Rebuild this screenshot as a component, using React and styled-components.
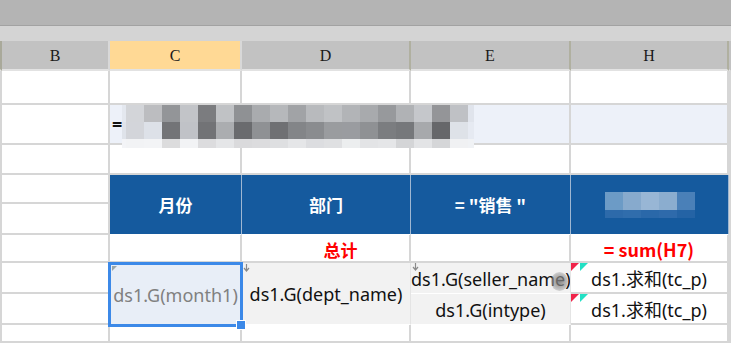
import React from 'react';
import styled, { createGlobalStyle, css } from 'styled-components';

const GlobalStyle = createGlobalStyle`
  html, body {
    margin: 0;
    padding: 0;
    background: #ffffff;
    overflow: hidden;
  }
  body {
    font-family: 'Noto Sans', 'Noto Sans CJK SC', sans-serif;
  }
`

const Page = styled.div`
  width: 731px;
  height: 343px;
  display: flex;
  flex-direction: column;
`

const TopBar = styled.div`
  height: 25px;
  background: #b4b4b4;
  border-bottom: 1px solid #a2a2a2;
`

const FormulaStrip = styled.div`
  height: 15px;
  background: #d4d4d4;
`

const Sheet = styled.div`
  flex: 1;
  display: grid;
  grid-template-columns: 2px 108px 132px 169px 160px 158px 2px;
  grid-template-rows: 30px 34px 40px 30px 29px 31px 28px 31px 31px 1fr;
`

const at = (p) => css`
  grid-column: ${p.$col} / span ${p.$cs || 1};
  grid-row: ${p.$row} / span ${p.$rs || 1};
`

const ColHeader = styled.div`
  ${at}
  box-sizing: border-box;
  display: flex;
  align-items: center;
  justify-content: center;
  background: ${(p) => (p.$active ? '#ffd995' : '#c2c2c2')};
  border-right: 2px solid ${(p) => p.$line || '#d6d6d6'};
  border-bottom: 2px solid #e2e2e2;
  font-family: 'Liberation Serif', serif;
  font-size: 16px;
  color: #1a1a1a;
  padding-top: 2px;
`

const Cell = styled.div`
  ${at}
  box-sizing: border-box;
  position: relative;
  display: flex;
  align-items: center;
  justify-content: center;
  min-width: 0;
  background: ${(p) => p.$bg || '#ffffff'};
  border-right: 2px solid ${(p) => p.$line || '#d6d6d6'};
  border-bottom: 2px solid ${(p) => p.$line || '#d6d6d6'};
  font-size: 18px;
  color: #111111;
  white-space: nowrap;
`

const TitleCell = styled(Cell)`
  justify-content: flex-start;
  align-items: flex-start;
  padding-left: 2px;
  overflow: visible;
  z-index: 1;
`

const Equals = styled.span`
  font-weight: 700;
  font-size: 18px;
  line-height: 38px;
  margin-right: 0;
`

const HeadCell = styled(Cell)`
  background: #155a9e;
  border-right: 1px solid #9fb7d2;
  border-bottom: 1px solid #ffffff;
  color: #ffffff;
  font-family: 'Noto Sans CJK SC', sans-serif;
  font-weight: 700;
  font-size: 17px;
`

const TotalCell = styled(Cell)`
  color: #ff0000;
  font-family: 'Noto Sans CJK SC', sans-serif;
  font-weight: 700;
  font-size: ${(p) => p.$size || 17}px;
  padding-left: ${(p) => p.$shift || 0}px;
  padding-top: 2px;
`

const DataCell = styled(Cell)`
  background: #f2f2f2;
  border-right: 1px solid #e4e4e4;
  border-bottom: 1px solid #ffffff;
  justify-content: ${(p) => (p.$left ? 'flex-start' : 'center')};
  overflow: hidden;
  padding-top: 1px;
`

const SelectedCell = styled(Cell)`
  background: #e8eef7;
  border: 3px solid #3c89e8;
  margin: -1px -1px -2px -2px;
  color: #808080;
  z-index: 2;
  overflow: visible;
  &::after {
    content: '';
    position: absolute;
    right: -6px;
    bottom: -6px;
    width: 8px;
    height: 8px;
    background: #3c89e8;
    border: 1px solid #ffffff;
  }
`

const SumCell = styled(Cell)`
  padding-top: 1px;
`

const Mark = styled.svg`
  position: absolute;
  left: ${(p) => p.$x || 0}px;
  top: ${(p) => p.$y || 0}px;
`

const Smudge = styled.div`
  position: absolute;
  right: 2px;
  top: 9px;
  width: 17px;
  height: 19px;
  border-radius: 50%;
  background: radial-gradient(circle, rgba(120,120,120,0.85) 0%, rgba(150,150,150,0.6) 55%, rgba(200,200,200,0) 100%);
`

const titleTop = ['#d3d5d9','#bcbdc0','#939598','#c2c4c8','#7b7c7f','#c0c2c5','#8f9194','#a9abae','#b6b8bb','#a1a3a6','#b8babd','#c0c2c5','#b2b4b7','#a8aaad','#97999c','#b0b2b5','#c5c7cb','#949598','#bfc1c5'];
const titleMid = ['#d3d5da','#dde1e8','#737477','#c0c2c7','#727376','#abadb0','#6a6b6e','#8f9194','#6f7073','#838588','#8a8c8f','#9a9c9f','#9a9ca0','#8f9194','#7b7d80','#76787b','#a7a9ac','#66676a','#dee2e8'];
const titleLow = ['#f2f3f5','#f3f4f6','#dcdcdd','#f2f3f5','#dcdcde','#e5e6e8','#dadadc','#dcdcde','#dedfe1','#e5e6e8','#dcdde0','#dfe0e2','#eceeef','#e3e4e6','#e5e6e8','#d4d5d7','#e3e4e6','#d5d6d8','#f0f1f3'];

const TitleMosaic = () => (
  <svg width="352" height="43" style={{ display: 'block' }}>
    <rect x="0" y="0" width="4" height="17" fill="#e4e8ef" />
    <rect x="0" y="17" width="4" height="17" fill="#dfe3ea" />
    <rect x="0" y="34" width="4" height="9" fill="#f3f4f7" />
    {titleTop.map((c, i) => (
      <React.Fragment key={i}>
        <rect x={4 + i * 18} y="0" width="18" height="17" fill={c} />
        <rect x={4 + i * 18} y="17" width="18" height="17" fill={titleMid[i]} />
        <rect x={4 + i * 18} y="34" width="18" height="9" fill={titleLow[i]} />
      </React.Fragment>
    ))}
    <rect x="346" y="0" width="6" height="17" fill="#e0e4ec" />
    <rect x="346" y="17" width="6" height="17" fill="#e6eaf2" />
    <rect x="346" y="34" width="6" height="9" fill="#f0f2f5" />
  </svg>
);

const headTop = ['#6c9bc6', '#87aacd', '#98b6d5', '#8badcf', '#4a80b8'];
const headLow = ['#2d6aaa', '#306dac', '#2a68a9', '#2e6aab', '#2463a5'];

const HeadMosaic = () => (
  <svg width="90" height="26">
    {headTop.map((c, i) => (
      <React.Fragment key={i}>
        <rect x={i * 18} y="0" width="18" height="18" fill={c} />
        <rect x={i * 18} y="18" width="18" height="8" fill={headLow[i]} />
      </React.Fragment>
    ))}
  </svg>
);

const DownMark = ({ x, y }) => (
  <Mark $x={x} $y={y} width="7" height="8" viewBox="0 0 7 8">
    <path d="M3.5 0 V6 M1 4 L3.5 7 L6 4" stroke="#8a8a8a" strokeWidth="1.2" fill="none" />
  </Mark>
);

const FlagMark = () => (
  <Mark $x={0} $y={0} width="18" height="9" viewBox="0 0 18 9">
    <polygon points="0,0 8,0 0,8" fill="#f0244a" />
    <polygon points="9,0 17,0 9,8" fill="#22e0c4" />
  </Mark>
);

const columns = [
  { col: 1, label: '', line: '#a9a99a' },
  { col: 2, label: 'B', line: '#d8d8d8' },
  { col: 3, label: 'C', active: true, line: '#d8d8d8' },
  { col: 4, label: 'D', line: '#b0b0a0' },
  { col: 5, label: 'E', line: '#b0b0a0' },
  { col: 6, label: 'H', line: '#b0b0a0' },
  { col: 7, label: '', line: '#c2c2c2' },
];

const plainCells = [
  // first body row
  [1, 2], [2, 2], [3, 2], [4, 2], [5, 2], [6, 2], [7, 2],
  // title row, left side
  [1, 3], [2, 3], [7, 3],
  [1, 4], [2, 4], [3, 4], [4, 4], [5, 4], [6, 4], [7, 4],
  // blue header rows, left side is split in two
  [1, 5], [2, 5], [1, 6], [2, 6], [7, 5, 2],
  // total row
  [1, 7], [2, 7], [3, 7], [5, 7], [7, 7],
  // data rows
  [1, 8], [2, 8], [1, 9], [2, 9], [7, 8], [7, 9],
  [1, 10], [2, 10], [3, 10], [4, 10], [5, 10], [6, 10], [7, 10],
];

export default function App() {
  return (
    <Page>
      <GlobalStyle />
      <TopBar />
      <FormulaStrip />
      <Sheet>
        {columns.map((c) => (
          <ColHeader key={c.col} $col={c.col} $row={1} $active={c.active} $line={c.line}>
            {c.label}
          </ColHeader>
        ))}

        {plainCells.map(([col, row, rs]) => (
          <Cell key={col + '-' + row} $col={col} $row={row} $rs={rs} />
        ))}

        <TitleCell $col={3} $cs={3} $row={3} $bg="#edf1f9">
          <Equals>=</Equals>
          <TitleMosaic />
        </TitleCell>
        <Cell $col={6} $row={3} $bg="#edf1f9" />

        <HeadCell $col={3} $row={5} $rs={2}>月份</HeadCell>
        <HeadCell $col={4} $row={5} $rs={2}>部门</HeadCell>
        <HeadCell $col={5} $row={5} $rs={2}>= "销售 "</HeadCell>
        <HeadCell $col={6} $row={5} $rs={2}>
          <HeadMosaic />
        </HeadCell>

        <TotalCell $col={4} $row={7} $shift={30}>总计</TotalCell>
        <TotalCell $col={6} $row={7} $size={18}>= sum(H7)</TotalCell>

        <SelectedCell $col={3} $row={8} $rs={2}>
          <Mark $x={1} $y={1} width="5" height="5" viewBox="0 0 5 5">
            <polygon points="0,0 5,0 0,5" fill="#9aa6a8" />
          </Mark>
          ds1.G(month1)
        </SelectedCell>
        <DataCell $col={4} $row={8} $rs={2}>
          <DownMark x={1} y={1} />
          ds1.G(dept_name)
        </DataCell>
        <DataCell $col={5} $row={8} $left>
          <DownMark x={1} y={0} />
          ds1.G(seller_name)
          <Smudge />
        </DataCell>
        <DataCell $col={5} $row={9}>ds1.G(intype)</DataCell>

        <SumCell $col={6} $row={8}>
          <FlagMark />
          ds1.求和(tc_p)
        </SumCell>
        <SumCell $col={6} $row={9}>
          <FlagMark />
          ds1.求和(tc_p)
        </SumCell>
      </Sheet>
    </Page>
  );
}
